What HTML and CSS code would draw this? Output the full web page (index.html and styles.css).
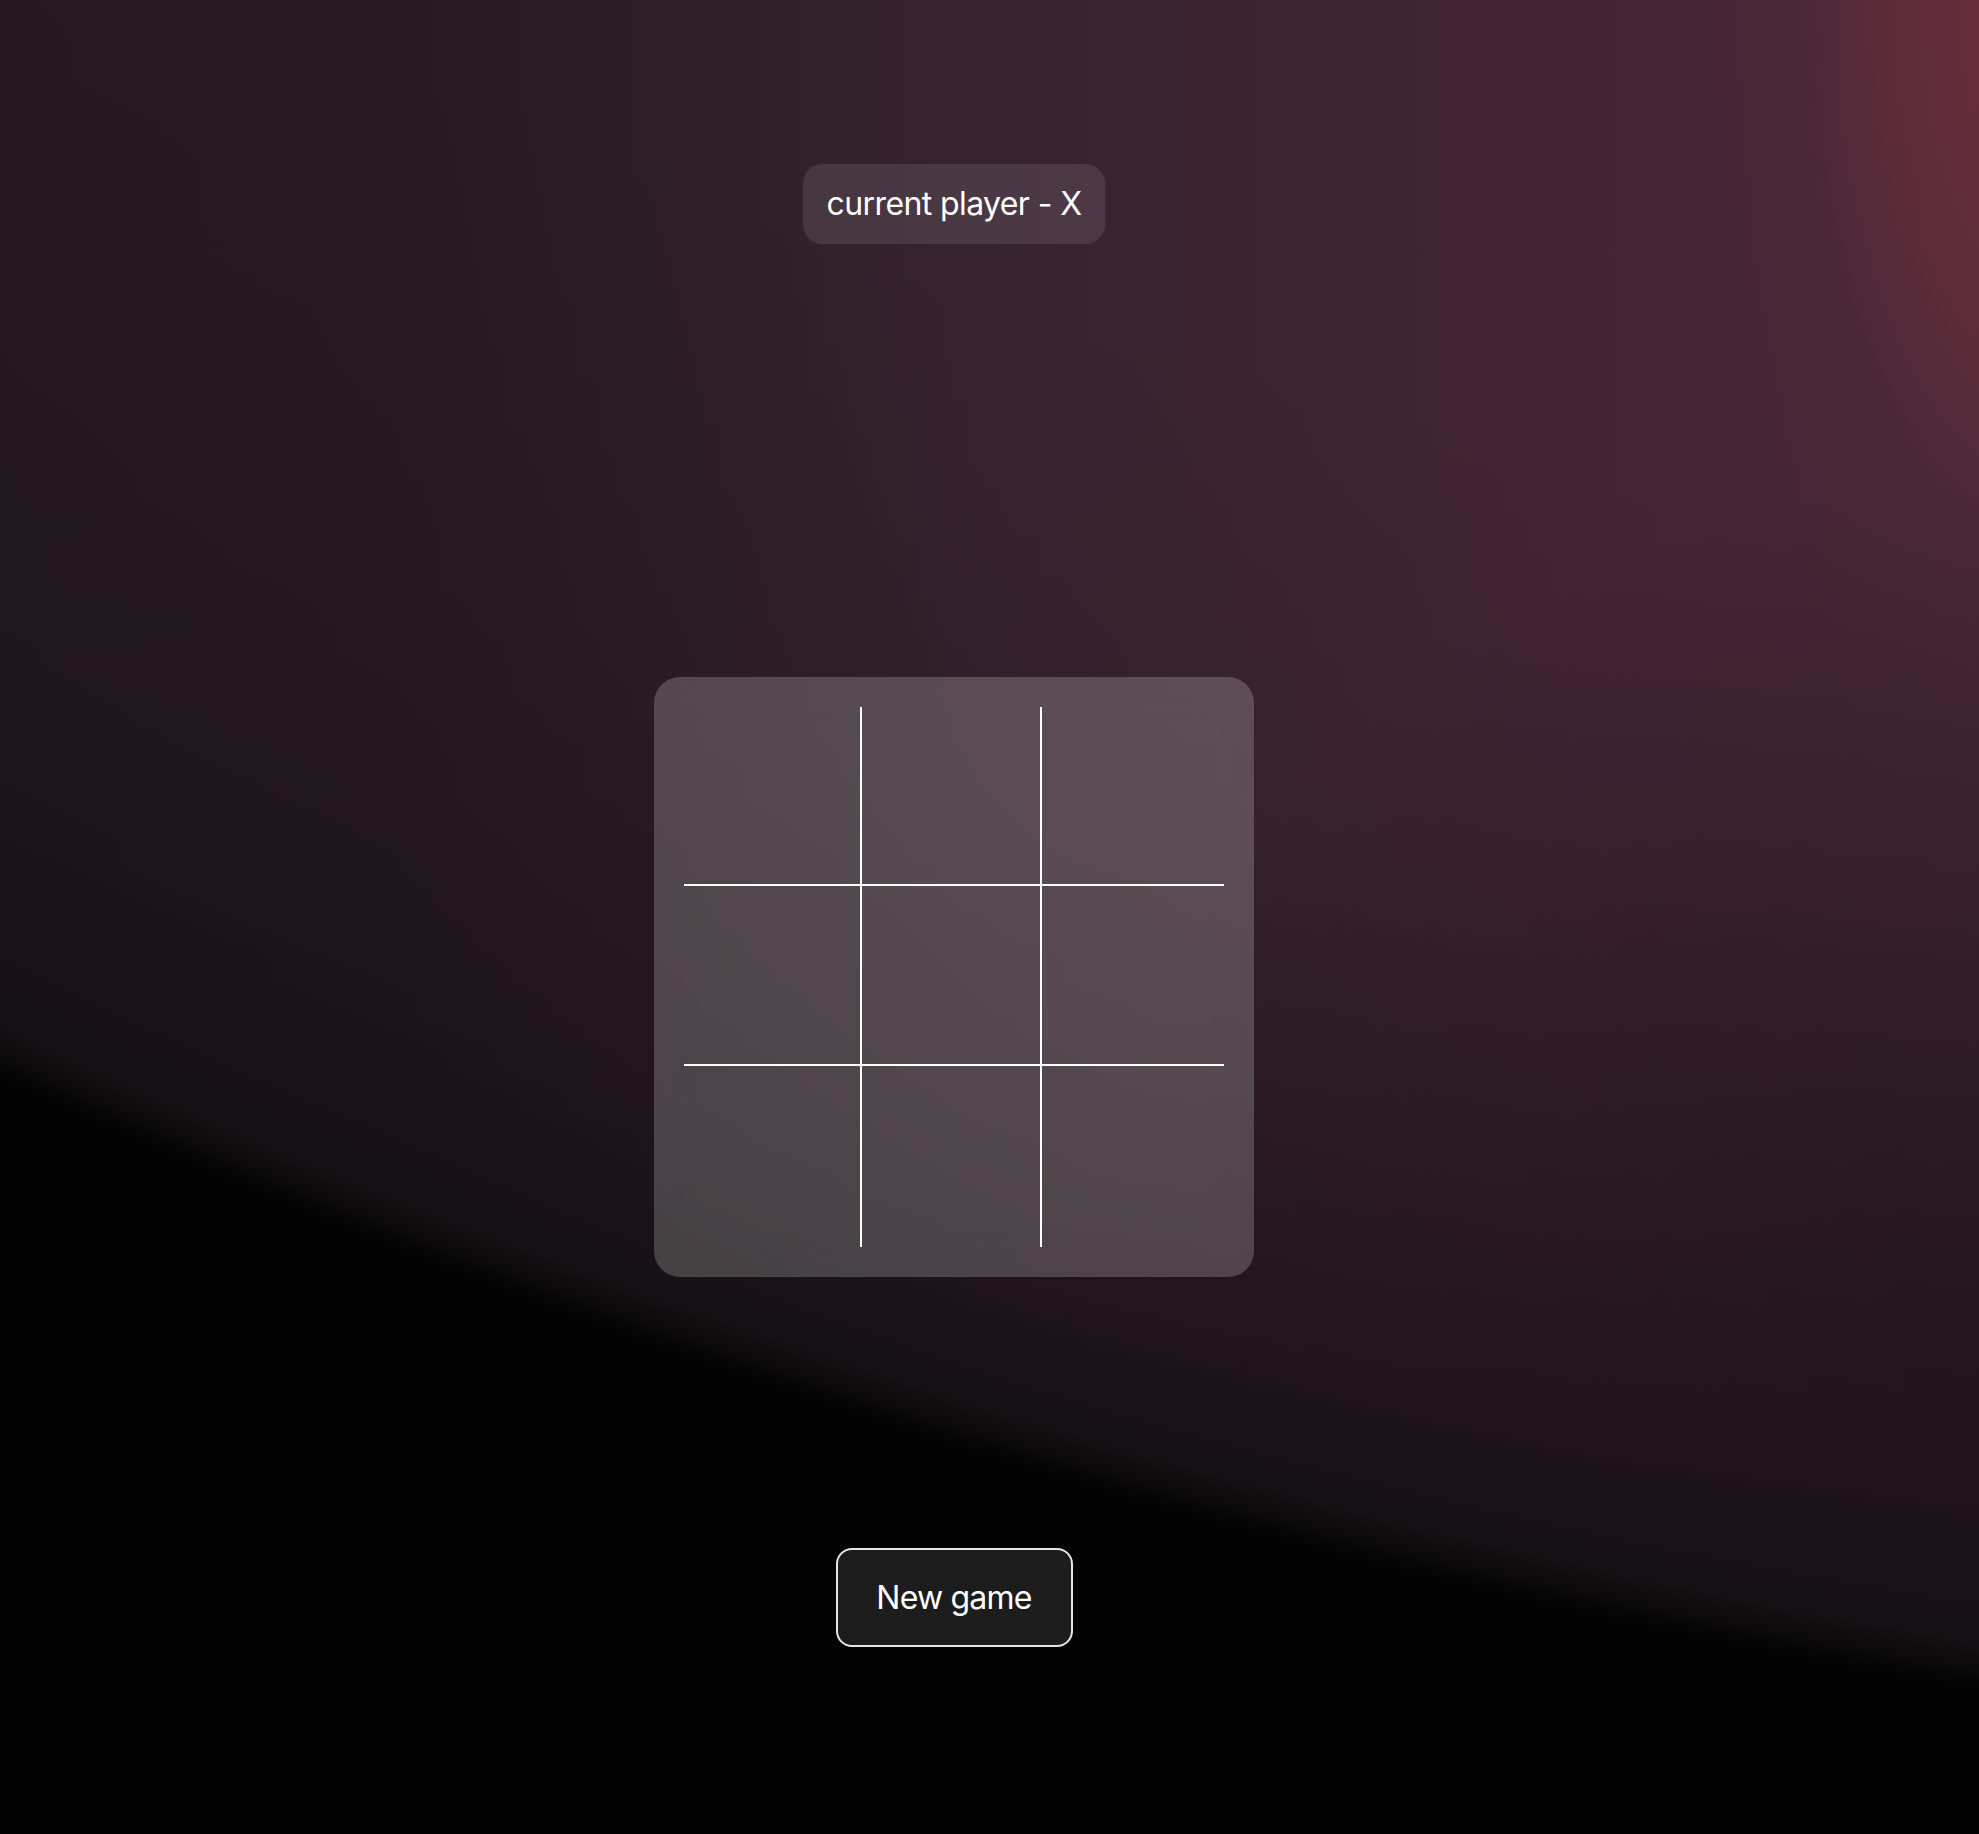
FILE: index.html
```html
<!DOCTYPE html>
<html lang="en">
<head>
<meta charset="utf-8">
<title>Tic Tac Toe</title>
<link rel="stylesheet" href="styles.css">
</head>
<body>
<main class="app">
  <div class="status">current player - X</div>
  <div class="board">
    <div class="grid">
      <button class="cell"></button>
      <button class="cell"></button>
      <button class="cell"></button>
      <button class="cell"></button>
      <button class="cell"></button>
      <button class="cell"></button>
      <button class="cell"></button>
      <button class="cell"></button>
      <button class="cell"></button>
    </div>
  </div>
  <button class="new-game">New game</button>
</main>
</body>
</html>
```
FILE: styles.css
```css
html, body {
  margin: 0;
  padding: 0;
}

body {
  min-height: 1834px;
  font-family: Inter, "Open Sans", "Liberation Sans", sans-serif;
  color: #fff;
  background-color: #030303;
  background-image:
    radial-gradient(circle 7640px at 3236px -5886px,
      rgba(24, 17, 21, 0) 6540px,
      rgba(24, 17, 21, 0.06) 6740px,
      rgba(24, 17, 21, 0.2) 7040px,
      rgba(24, 17, 21, 0.42) 7270px,
      rgba(24, 17, 21, 0.75) 7490px,
      rgba(22, 17, 20, 1) 7630px,
      #030303 7680px),
    radial-gradient(circle 900px at 100% 75%,
      rgba(24, 17, 21, 0.6) 0,
      rgba(24, 17, 21, 0) 100%),
    radial-gradient(ellipse 450px 900px at calc(100% + 100px) 0,
      rgba(104, 46, 58, 1) 20%,
      rgba(104, 46, 58, 0.6) 44%,
      rgba(104, 46, 58, 0.12) 62%,
      rgba(104, 46, 58, 0) 85%),
    linear-gradient(to right,
      #241a20 0%,
      #261b22 20%,
      #2e1f27 35%,
      #372230 50%,
      #3c2430 65%,
      #442536 80%,
      #482838 100%);
  background-repeat: no-repeat;
}

.app {
  box-sizing: border-box;
  min-height: 1834px;
  padding: 164px 71px 0 0;
  display: flex;
  flex-direction: column;
  align-items: center;
}

.status {
  box-sizing: border-box;
  height: 80px;
  padding: 0 24px;
  display: flex;
  align-items: center;
  font-size: 32px;
  line-height: 1;
  letter-spacing: -0.6px;
  background: rgba(255, 255, 255, 0.1);
  border-radius: 20px;
  box-shadow: 0 0 6px rgba(255, 255, 255, 0.04);
}

.board {
  box-sizing: border-box;
  width: 600px;
  height: 600px;
  margin-top: 433px;
  padding: 30px;
  border-radius: 26px;
  background: rgba(255, 255, 255, 0.2);
  backdrop-filter: blur(20px);
}

.grid {
  width: 540px;
  height: 540px;
  display: grid;
  grid-template-columns: 178px 180px 182px;
  grid-template-rows: 179px 180px 181px;
}

.cell {
  margin: 0;
  padding: 0;
  background: transparent;
  border: 0;
  border-right: 2px solid #fff;
  border-bottom: 2px solid #fff;
}

.cell:nth-child(3n) {
  border-right: 0;
}

.cell:nth-child(n+7) {
  border-bottom: 0;
}

.new-game {
  box-sizing: border-box;
  width: 237px;
  height: 99px;
  margin-top: 271px;
  padding: 0;
  font-family: Inter, "Open Sans", "Liberation Sans", sans-serif;
  font-size: 32px;
  letter-spacing: -0.8px;
  color: #fff;
  background: #1c1c1c;
  border: 2px solid #e6e6e6;
  border-radius: 16px;
}
```
